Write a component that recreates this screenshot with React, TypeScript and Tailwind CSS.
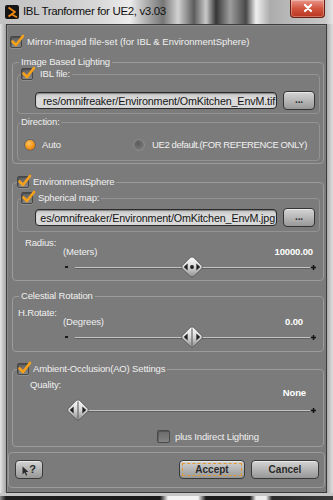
import React from 'react';

const PATH1 = 'res/omnifreaker/Environment/OmKitchen_EnvM.tif';
const PATH2 = 'es/omnifreaker/Environment/OmKitchen_EnvM.jpg';

function Check({ on = true }: { on?: boolean }) {
  return (
    <span className="relative block h-[12px] w-[12px] shrink-0 rounded-[2px] border border-[#474747] bg-[linear-gradient(#5e5e5e,#878787)] shadow-[inset_1px_1px_0_rgba(0,0,0,0.2),0_1px_0_rgba(255,255,255,0.15)]">
      {on && (
        <svg className="absolute left-[-1px] top-[-3px]" width="15" height="14" viewBox="0 0 15 14">
          <path d="M2.5 7.5 L6 11 L13 2" fill="none" stroke="#f7a11a" strokeWidth="2.6" strokeLinecap="round" strokeLinejoin="round" />
        </svg>
      )}
    </span>
  );
}

function Radio({ on }: { on: boolean }) {
  return (
    <svg width="12" height="12" viewBox="0 0 12 12" className="shrink-0">
      <defs>
        <radialGradient id={on ? 'rOn' : 'rOff'} cx="40%" cy="35%" r="70%">
          <stop offset="0" stopColor={on ? '#ffc45c' : '#5a5a5a'} />
          <stop offset="1" stopColor={on ? '#e87d00' : '#7c7c7c'} />
        </radialGradient>
      </defs>
      <circle cx="6" cy="6" r="5.8" fill={on ? '#5e5e5e' : '#909090'} />
      <circle cx="6" cy="6" r="5" fill={`url(#${on ? 'rOn' : 'rOff'})`} />
    </svg>
  );
}

function Thumb({ id, dot }: { id: string; dot: boolean }) {
  return (
    <svg width="24" height="22" viewBox="0 0 24 22">
      <defs>
        <linearGradient id={id} x1="0" y1="0" x2="0" y2="1">
          <stop offset="0" stopColor="#fbfbfb" />
          <stop offset="0.5" stopColor="#d6d6d6" />
          <stop offset="1" stopColor="#8e8e8e" />
        </linearGradient>
      </defs>
      <path
        d="M12 1 Q13.2 1 14.6 2.4 L21.6 9.4 Q23.2 11 21.6 12.6 L14.6 19.6 Q13.2 21 12 21 Q10.8 21 9.4 19.6 L2.4 12.6 Q0.8 11 2.4 9.4 L9.4 2.4 Q10.8 1 12 1 Z"
        fill={`url(#${id})`}
        stroke="#555"
        strokeWidth="0.8"
      />
      <path d="M3.8 11 L7.6 7.6 L7.6 14.4 Z" fill="#202020" />
      <path d="M20.2 11 L16.4 7.6 L16.4 14.4 Z" fill="#202020" />
      {dot ? (
        <circle cx="12" cy="11" r="1.9" fill="#1c1c1c" />
      ) : (
        <line x1="12" y1="2.5" x2="12" y2="19.5" stroke="#6a6a6a" strokeWidth="1.2" />
      )}
    </svg>
  );
}

function Slider({ id, thumb, dot, minus = true }: { id: string; thumb: string; dot: boolean; minus?: boolean }) {
  return (
    <div className="relative flex h-[20px] items-center">
      <span className={`ml-[2px] block h-[2px] w-[3px] ${minus ? 'bg-[#1a1a1a]' : 'bg-transparent'}`} />
      <span className="ml-[7px] block h-[1px] flex-1 bg-[#c4c4c4] shadow-[0_1px_0_#5f5f5f]" />
      <svg className="ml-[1px] mr-[2px] shrink-0" width="5" height="5" viewBox="0 0 5 5">
        <path d="M0 2.5 H5 M2.5 0 V5" stroke="#111" strokeWidth="1.5" />
      </svg>
      <span className={`absolute top-[-1px] ${thumb}`}>
        <Thumb id={id} dot={dot} />
      </span>
    </div>
  );
}

function PathField({ text }: { text: string }) {
  return (
    <div className="flex h-[17px] w-[242px] items-center justify-end overflow-hidden whitespace-nowrap rounded-[4px] border border-[#2b2b2b] bg-[linear-gradient(#c6c6c6,#dcdcdc_40%,#d6d6d6)] pr-[1px] text-[10.75px] text-[#151515] shadow-[inset_0_1px_1px_rgba(0,0,0,0.35)]">
      <span className="shrink-0">{text}</span>
    </div>
  );
}

function DotsButton() {
  return (
    <div className="flex h-[19px] w-[32px] items-center justify-center rounded-[4px] border border-[#353535] bg-[linear-gradient(#d4d4d4,#b4b4b4_55%,#989898)] pb-[2px] text-[10px] font-bold leading-none text-[#2a2a2a] shadow-[inset_0_1px_0_rgba(255,255,255,0.5)]">
      ...
    </div>
  );
}

function Logo() {
  return (
    <svg width="14" height="14" viewBox="0 0 14 14" className="shrink-0">
      <rect x="0" y="0" width="14" height="14" rx="2" fill="#151515" />
      <path d="M3.5 2.5 L10 7 L3.5 11.5" fill="none" stroke="#f28a12" strokeWidth="1.8" strokeLinejoin="round" />
      <path d="M7 9.5 L11.5 12" fill="none" stroke="#f28a12" strokeWidth="1.6" strokeLinecap="round" />
    </svg>
  );
}

export default function App() {
  return (
    <div className="flex h-[500px] w-[333px] flex-col overflow-hidden bg-[linear-gradient(90deg,#e4e4e4_0px,#c4c4c4_3px,#a8a8a8_6px,#a8a8a8_327px,#c8c8c8_330px,#dcdcdc_333px)] font-['Liberation_Sans',Arial,sans-serif]">
      {/* title bar */}
      <div className="flex h-[24px] shrink-0 items-center bg-[linear-gradient(90deg,#c2c2c2_0px,#cdcdcd_60px,#d9d9d9_100px,#ececec_130px,#a9a9a9_148px,#767676_163px,#d2d2d2_178px,#5c5c5c_194px,#cacaca_206px,#363636_216px,#9e9e9e_230px,#484848_246px,#efefef_256px,#acacac_270px,#b8b8b8_288px,#c8c8c8_326px,#e6e6e6_333px)] pl-[5px]">
        <Logo />
        <span className="ml-[4px] text-[11.5px] tracking-[-0.35px] text-[#111]">IBL Tranformer for UE2, v3.03</span>
        <div className="mr-[8px] ml-auto flex h-[18px] w-[35px] items-start justify-center self-start rounded-b-[4px] border border-t-0 border-[#6b1d12] bg-[linear-gradient(#e9968a,#d2553f_50%,#b93621)] pt-[1px] shadow-[inset_0_0_0_1px_rgba(255,255,255,0.3)]">
          <svg width="10" height="10" viewBox="0 0 10 10" className="mt-[2px]">
            <path d="M2 2 L8 8 M8 2 L2 8" stroke="#fff" strokeWidth="2.2" strokeLinecap="round" />
          </svg>
        </div>
      </div>

      {/* body */}
      <div className="mx-[6px] flex h-[469px] shrink-0 flex-col border border-[#3c3c3c] bg-[#7b7b7b] text-[9.5px] leading-[12px] tracking-[-0.15px] text-[#f0f0f0] shadow-[inset_1px_1px_0_#8c8c8c]">
        {/* mirror row */}
        <div className="ml-[3px] mt-[10px] flex h-[13px] items-center gap-[5px]">
          <Check />
          <span className="tracking-[0px]">Mirror-Imaged file-set (for IBL &amp; EnvironmentSphere)</span>
        </div>

        {/* Image Based Lighting */}
        <fieldset className="ml-[5px] mt-[8px] w-[312px] rounded-[4px] border border-[#9b9b9b] pb-[2px] pl-[4px] pr-[3px]">
          <legend className="ml-[2px] h-[12px] px-[2px]">Image Based Lighting</legend>

          <fieldset className="w-[303px] rounded-[4px] border border-[#939393] pb-[3px]">
            <legend className="ml-[3px] flex h-[12px] items-center gap-[7px] pr-[2px]">
              <Check />
              <span>IBL file:</span>
            </legend>
            <div className="ml-[17px] mt-[11px] flex h-[19px] items-center gap-[6px]">
              <PathField text={PATH1} />
              <DotsButton />
            </div>
          </fieldset>

          <fieldset className="mt-[2px] w-[303px] rounded-[4px] border border-[#939393] pb-[9px]">
            <legend className="ml-[2px] h-[12px] px-[1px]">Direction:</legend>
            <div className="ml-[6px] mt-[11px] flex h-[12px] items-center">
              <div className="flex w-[109px] items-center gap-[6px]">
                <Radio on />
                <span>Auto</span>
              </div>
              <div className="flex items-center gap-[7px]">
                <Radio on={false} />
                <span className="tracking-[-0.4px]">UE2 default.(FOR REFERENCE ONLY)</span>
              </div>
            </div>
          </fieldset>
        </fieldset>

        {/* EnvironmentSphere */}
        <fieldset className="ml-[5px] mt-[12px] w-[312px] rounded-[4px] border border-[#9b9b9b] pb-[3px] pl-[4px] pr-[3px]">
          <legend className="flex h-[12px] items-center gap-[4px] pr-[2px]">
            <Check />
            <span>EnvironmentSphere</span>
          </legend>

          <fieldset className="mt-[4px] w-[303px] rounded-[4px] border border-[#939393] pb-[4px]">
            <legend className="ml-[3px] flex h-[12px] items-center gap-[5px] pr-[2px]">
              <Check />
              <span>Spherical map:</span>
            </legend>
            <div className="ml-[17px] mt-[4px] flex h-[19px] items-center gap-[6px]">
              <PathField text={PATH2} />
              <DotsButton />
            </div>
          </fieldset>

          <div className="mt-[5px] flex">
            <span className="ml-[8px] w-[38px] shrink-0">Radius:</span>
            <div className="flex w-[255px] flex-col pt-[9px]">
              <div className="flex h-[11px] items-center justify-between pr-[5px]">
                <span>(Meters)</span>
                <span className="font-bold text-white">10000.00</span>
              </div>
              <Slider id="t1" thumb="left-[117px]" dot />
            </div>
          </div>
        </fieldset>

        {/* Celestial Rotation */}
        <fieldset className="ml-[5px] mt-[9px] w-[312px] rounded-[4px] border border-[#9b9b9b] pb-[4px] pl-[4px] pr-[3px]">
          <legend className="ml-[2px] h-[12px] px-[2px]">Celestial Rotation</legend>
          <div className="mt-[5px] flex">
            <span className="ml-[1px] w-[45px] shrink-0">H.Rotate:</span>
            <div className="flex w-[255px] flex-col pt-[10px]">
              <div className="flex h-[10px] items-center justify-between pr-[15px]">
                <span>(Degrees)</span>
                <span className="font-bold text-white">0.00</span>
              </div>
              <Slider id="t2" thumb="left-[117px]" dot={false} />
            </div>
          </div>
        </fieldset>

        {/* Ambient Occlusion */}
        <fieldset className="ml-[5px] mt-[11px] w-[312px] rounded-[4px] border border-[#9b9b9b] pb-[3px] pl-[4px] pr-[3px]">
          <legend className="flex h-[12px] items-center gap-[4px] pr-[2px]">
            <Check />
            <span>Ambient-Occlusion(AO) Settings</span>
          </legend>
          <div className="mt-[4px] flex">
            <span className="ml-[13px] w-[33px] shrink-0">Quality:</span>
            <div className="flex w-[255px] flex-col pt-[9px]">
              <div className="flex h-[10px] items-center justify-end pr-[12px]">
                <span className="font-bold text-white">None</span>
              </div>
              <div className="mt-[2px]">
                <Slider id="t3" thumb="left-[3px]" dot={false} minus={false} />
              </div>
            </div>
          </div>
          <div className="ml-[140px] mt-[10px] flex h-[13px] items-center gap-[5px]">
            <span className="block h-[13px] w-[13px] rounded-[2px] border border-[#4a4a4a] bg-[linear-gradient(#6a6a6a,#848484)] shadow-[inset_1px_1px_0_rgba(0,0,0,0.2)]" />
            <span>plus Indirect Lighting</span>
          </div>
        </fieldset>

        {/* buttons */}
        <div className="ml-[1px] mt-[5px] flex w-[317px] items-start rounded-[4px] border border-[#9b9b9b] pb-[8px] pl-[6px] pr-[5px] pt-[7px]">
          <div className="flex h-[19px] w-[28px] items-center justify-center rounded-[4px] border border-[#3a3a3a] bg-[linear-gradient(#d4d4d4,#b2b2b2_55%,#979797)] shadow-[inset_0_1px_0_rgba(255,255,255,0.5)]">
            <svg width="7" height="10" viewBox="0 0 7 10" className="mt-[2px]">
              <path d="M0.5 0.5 L0.5 8.5 L2.5 6.6 L4 9.5 L5.2 8.9 L3.8 6 L6.5 6 Z" fill="#2a2a2a" />
            </svg>
            <span className="text-[11px] font-bold leading-none text-[#2a2a2a]">?</span>
          </div>
          <div className="ml-auto flex h-[19px] w-[66px] items-center justify-center rounded-[4px] border border-[#3a3a3a] bg-[linear-gradient(#d4d4d4,#b2b2b2_55%,#979797)] p-[2px] shadow-[inset_0_1px_0_rgba(255,255,255,0.5)]">
            <div className="flex h-full w-full items-center justify-center border border-dashed border-[#e39a2b] text-[10px] font-bold tracking-normal text-[#2a2a2a]">
              Accept
            </div>
          </div>
          <div className="ml-[6px] flex h-[19px] w-[68px] items-center justify-center rounded-[4px] border border-[#3a3a3a] bg-[linear-gradient(#d4d4d4,#b2b2b2_55%,#979797)] text-[10px] font-bold tracking-normal text-[#2a2a2a] shadow-[inset_0_1px_0_rgba(255,255,255,0.5)]">
            Cancel
          </div>
        </div>
      </div>

      {/* bottom frame */}
      <div className="h-[3px] shrink-0 bg-[#c6c6c6]" />
      <div className="h-[4px] shrink-0 bg-[linear-gradient(90deg,#8a8a8a_0px,#1e1e1e_6px,#1a1a1a_160px,#f2f2f2_168px,#f2f2f2_198px,#1c1c1c_206px,#1c1c1c_250px,#ededed_256px,#ededed_266px,#2a2a2a_272px,#3a3a3a_333px)]" />
    </div>
  );
}
